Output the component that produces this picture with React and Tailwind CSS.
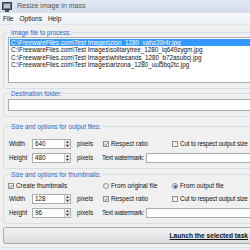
import React from "react";

const F = { fontFamily: '"Liberation Sans", Arial, sans-serif' };

function Spin({ value, w = "w-[39px]" }) {
  return (
    <div className={`flex h-[10px] ${w} border border-[#abadb3] bg-white`}>
      <div className="flex-1 pl-[2px] leading-[8px]">{value}</div>
      <div className="flex w-[6px] flex-col border-l border-[#c9c9c9] bg-[#ececec]">
        <div className="flex flex-1 items-center justify-center border-b border-[#c9c9c9]">
          <svg width="3" height="2" viewBox="0 0 3 2"><path d="M0 2 L1.5 0 L3 2Z" fill="#333" /></svg>
        </div>
        <div className="flex flex-1 items-center justify-center">
          <svg width="3" height="2" viewBox="0 0 3 2"><path d="M0 0 L1.5 2 L3 0Z" fill="#333" /></svg>
        </div>
      </div>
    </div>
  );
}

function Check({ checked }) {
  return (
    <div className="flex h-[6px] w-[6px] shrink-0 items-center justify-center border border-[#8f8f8f] bg-gradient-to-br from-[#e4e4e4] to-white">
      {checked && (
        <svg width="5" height="5" viewBox="0 0 5 5"><path d="M0.7 2.6 L2 4 L4.4 0.8" stroke="#3a5a9a" strokeWidth="1" fill="none" /></svg>
      )}
    </div>
  );
}

function Radio({ checked }) {
  return (
    <div className="flex h-[6px] w-[6px] shrink-0 items-center justify-center rounded-full border border-[#8f8f8f] bg-gradient-to-br from-[#e4e4e4] to-white">
      {checked && <div className="h-[3px] w-[3px] rounded-full bg-[#2f6bc3]" />}
    </div>
  );
}

function Group({ label, children, className = "" }) {
  return (
    <fieldset className={`rounded-[3px] border border-[#d5dfe5] px-[4px] ${className}`}>
      <legend className="ml-[2px] px-[1px] leading-[7px] text-[#2a62c5]">{label}</legend>
      {children}
    </fieldset>
  );
}

function SizeRows({ w, h }) {
  return (
    <div className="flex flex-col gap-[4px]">
      <div className="flex h-[10px] items-center">
        <div className="w-[24px] shrink-0 pl-[1px]">Width</div>
        <Spin value={w} />
        <div className="ml-[6px] w-[26px] shrink-0">pixels</div>
        <Check checked />
        <div className="ml-[2px] w-[61px] shrink-0">Respect ratio</div>
        <Check />
        <div className="ml-[2px] whitespace-nowrap tracking-[-0.15px]">Cut to respect output size</div>
      </div>
      <div className="flex h-[10px] items-center">
        <div className="w-[24px] shrink-0 pl-[1px]">Height</div>
        <Spin value={h} />
        <div className="ml-[6px] w-[25px] shrink-0">pixels</div>
        <div className="w-[44px] shrink-0 whitespace-nowrap tracking-[-0.15px]">Text watermark:</div>
        <div className="h-[10px] flex-1 border border-[#abadb3] bg-white" />
      </div>
    </div>
  );
}

export default function App() {
  const files = [
    "C:\\FreewareFiles.com\\Test Images\\zion_1280_vahz20r4r.jpg",
    "C:\\FreewareFiles.com\\Test Images\\solitarytree_1280_iq649zygm.jpg",
    "C:\\FreewareFiles.com\\Test Images\\whitesands_1280_b72asubcj.jpg",
    "C:\\FreewareFiles.com\\Test Images\\arizona_1280_uul5bq2tc.jpg",
  ];
  return (
    <div className="h-[250px] w-[250px] overflow-hidden bg-[#f0f0f0] text-[6.3px] text-[#111]" style={F}>
      <div className="w-[275px]">
        {/* title bar */}
        <div className="flex h-[13px] items-center gap-[5px] bg-gradient-to-b from-[#e0e8f2] to-[#d3deeb] pl-[2px]">
          <svg width="10" height="10" viewBox="0 0 10 10">
            <rect x="0.5" y="0.5" width="9" height="7" fill="#6e7480" stroke="#3a3d44" />
            <rect x="2" y="2" width="6" height="4" fill="#b9c3cf" />
            <rect x="3" y="8" width="4" height="2" fill="#4a4d55" />
          </svg>
          <span className="text-[7px] text-[#555]">Resize image in mass</span>
        </div>
        {/* menu */}
        <div className="flex h-[12px] items-center gap-[6px] border-b border-[#e3e6ea] bg-gradient-to-b from-[#f7f9fb] to-[#eef1f5] pl-[3px] text-[6.5px]">
          <span>File</span>
          <span>Options</span>
          <span>Help</span>
        </div>
        <div className="px-[3px] pt-[4px]">
          <Group label="Image file to process:" className="pb-[5px]">
            <div className="mt-[1px] h-[46px] border border-[#abadb3] bg-white pl-[1px] pt-[1px]">
              {files.map((f, i) => (
                <div key={i} className={`h-[7.4px] whitespace-nowrap pl-[1px] leading-[7.4px] ${i === 0 ? "bg-[#3399ff] text-white" : ""}`}>
                  {f}
                </div>
              ))}
            </div>
          </Group>
          <Group label="Destination folder:" className="mt-[1px] pb-[5px]">
            <div className="mt-[2px] h-[12px] border border-[#abadb3] bg-white" />
          </Group>
          <Group label="Size and options for output files:" className="mt-[6px] pb-[5px]">
            <div className="mt-[9px]">
              <SizeRows w="640" h="480" />
            </div>
          </Group>
          <Group label="Size and options for thumbnails:" className="mt-[2px] pb-[5px]">
            <div className="mt-[4px] flex h-[8px] items-center">
              <Check checked />
              <div className="ml-[2px] w-[87px] shrink-0">Create thumbnails</div>
              <Radio />
              <div className="ml-[2px] w-[61px] shrink-0">From original file</div>
              <Radio checked />
              <div className="ml-[2px]">From output file</div>
            </div>
            <div className="mt-[4px]">
              <SizeRows w="128" h="96" />
            </div>
          </Group>
          <div className="mt-[3px] flex h-[17px] items-center justify-end rounded-[2px] border border-[#acacac] bg-gradient-to-b from-[#f2f2f2] to-[#dcdcdc] pr-[23px]">
            <span className="text-[6.6px] font-bold underline">Launch the selected task</span>
          </div>
        </div>
        <div className="mt-[3px] h-[10px] border-t border-[#d8e2ee] bg-[#e9f0f9]" />
      </div>
    </div>
  );
}
